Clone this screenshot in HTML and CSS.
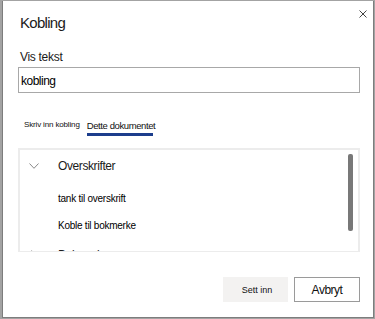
FILE: index.html
```html
<!DOCTYPE html>
<html lang="no">
<head>
<meta charset="utf-8">
<title>Kobling</title>
<link rel="stylesheet" href="styles.css">
</head>
<body>
<div class="dialog">
  <div class="header">
    <div class="title">Kobling</div>
    <button class="close" aria-label="Lukk">
      <svg width="8" height="8" viewBox="0 0 8 8"><path d="M0.5 0.5 L7.5 7.5 M7.5 0.5 L0.5 7.5" stroke="#444" stroke-width="1" fill="none"/></svg>
    </button>
  </div>
  <div class="label">Vis tekst</div>
  <div class="field">kobling</div>
  <div class="tabs">
    <div class="tab">Skriv inn kobling</div>
    <div class="tab active">Dette dokumentet</div>
  </div>
  <div class="list">
    <div class="tree">
      <div class="group">
        <svg class="chev" width="10" height="6" viewBox="0 0 10 6"><path d="M0.5 0.5 L5 5.3 L9.5 0.5" stroke="#8a8a8a" stroke-width="1" fill="none"/></svg>
        <span>Overskrifter</span>
      </div>
      <div class="item first">tank til overskrift</div>
      <div class="item">Koble til bokmerke</div>
      <div class="group last">
        <svg class="chev right" width="6" height="10" viewBox="0 0 6 10"><path d="M0.5 0.5 L5.3 5 L0.5 9.5" stroke="#8a8a8a" stroke-width="1" fill="none"/></svg>
        <span>Bokmerker</span>
      </div>
    </div>
    <div class="scroll"></div>
  </div>
  <div class="footer">
    <button class="btn primary">Sett inn</button>
    <button class="btn secondary">Avbryt</button>
  </div>
</div>
</body>
</html>
```
FILE: styles.css
```css
html, body {
  margin: 0;
  padding: 0;
}
body {
  width: 375px;
  height: 319px;
  overflow: hidden;
  background: #a3a3a3;
  font-family: "Liberation Sans", Arial, sans-serif;
  color: #1b1b1b;
}
.dialog {
  margin: 1px 0 0 2px;
  width: 372px;
  height: 317px;
  box-sizing: border-box;
  background: #fff;
  border: 1px solid #7d7d7d;
  border-top: none;
  padding: 12px 13px 0 15px;
  display: flex;
  flex-direction: column;
}
.header {
  display: flex;
  justify-content: space-between;
  align-items: flex-start;
  height: 20px;
}
.title {
  font-size: 15px;
  line-height: 20px;
  letter-spacing: -0.7px;
  padding-left: 2px;
}
.close {
  border: none;
  background: none;
  padding: 0;
  margin: -3px -7px 0 0;
  width: 8px;
  height: 8px;
  display: flex;
}
.label {
  margin-top: 17px;
  font-size: 12px;
  line-height: 15px;
  letter-spacing: -0.3px;
  padding-left: 2px;
}
.field {
  margin-top: 2px;
  height: 26px;
  box-sizing: border-box;
  border: 1px solid #a8a8a8;
  padding: 6px 2px 3px 2px;
  font-size: 12px;
  line-height: 15px;
  letter-spacing: -0.5px;
  color: #000;
}
.tabs {
  margin-top: 26px;
  display: flex;
  align-items: flex-start;
  gap: 7px;
  padding-left: 6px;
  height: 17px;
}
.tab {
  font-size: 8px;
  line-height: 11px;
  letter-spacing: -0.15px;
  color: #111;
}
.tab.active {
  margin-top: 1px;
  font-size: 9.5px;
  line-height: 12px;
  letter-spacing: -0.4px;
  display: flex;
  flex-direction: column;
}
.tab.active::after {
  content: "";
  display: block;
  margin-top: 1px;
  width: 66px;
  height: 3px;
  background: #1c3d8c;
}
.list {
  margin-top: 12px;
  height: 104px;
  box-sizing: border-box;
  border: 2px solid #ececec;
  border-bottom-width: 1px;
  display: flex;
  overflow: hidden;
}
.tree {
  flex: 1;
  padding-top: 9px;
  overflow: hidden;
}
.group {
  display: flex;
  align-items: flex-start;
  font-size: 12px;
  line-height: 15px;
  letter-spacing: -0.4px;
  height: 15px;
}
.chev {
  margin: 4px 19px 0 9px;
  flex: none;
}
.chev.right {
  margin: 2px 21px 0 11px;
}
.group.last {
  margin-top: 16px;
}
.item {
  padding-left: 38px;
  font-size: 10px;
  line-height: 13px;
  letter-spacing: -0.25px;
  color: #000;
  margin-top: 14px;
}
.item.first {
  margin-top: 18px;
}
.scroll {
  flex: none;
  width: 5px;
  height: 77px;
  margin: 4px 5px 0 0;
  border-radius: 2px;
  background: #787878;
}
.footer {
  margin-top: 25px;
  display: flex;
  justify-content: flex-end;
  gap: 6px;
}
.btn {
  height: 25px;
  box-sizing: border-box;
  font-family: "Liberation Sans", Arial, sans-serif;
  color: #111;
  padding: 0;
  display: flex;
  align-items: center;
  justify-content: center;
}
.btn.primary {
  width: 65px;
  background: #f3f2f1;
  border: none;
  font-size: 9px;
  padding-left: 3px;
}
.btn.secondary {
  width: 66px;
  background: #fff;
  border: 1px solid #9a9a9a;
  font-size: 12px;
  letter-spacing: -0.5px;
}
```
